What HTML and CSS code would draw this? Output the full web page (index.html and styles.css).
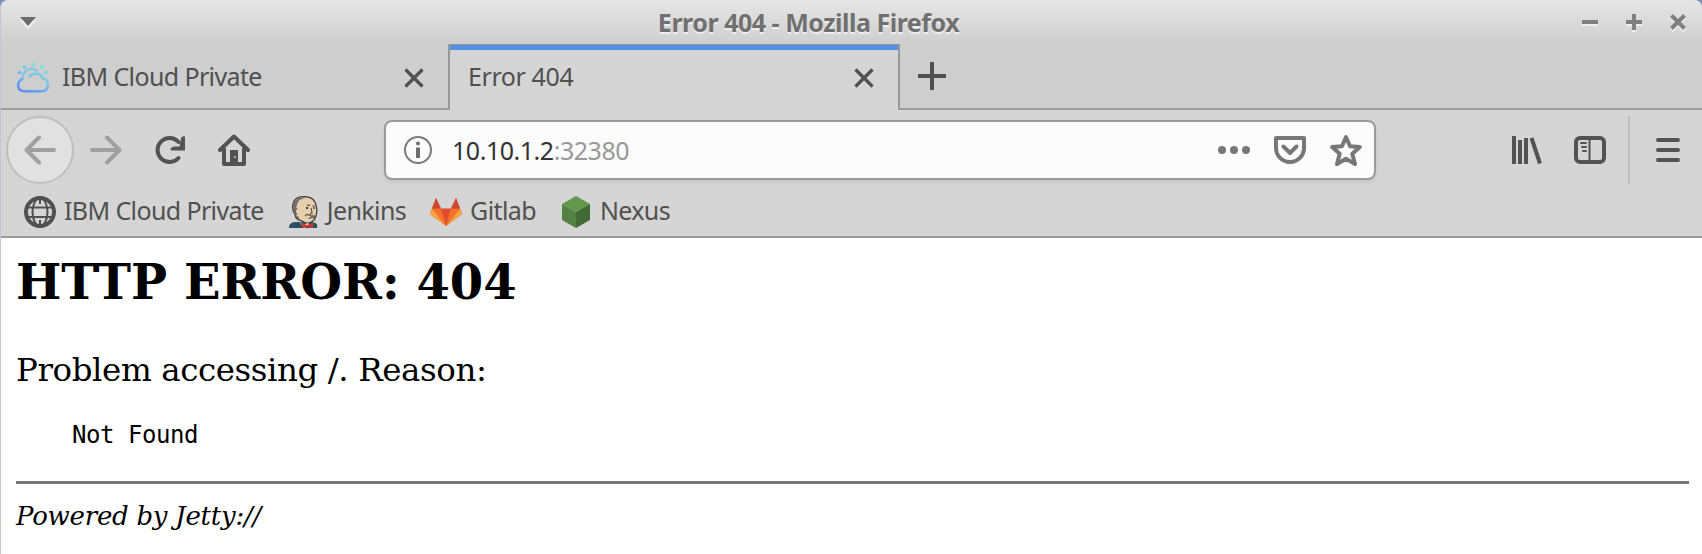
FILE: index.html
```html
<!DOCTYPE html>
<html lang="en">
<head>
<meta charset="utf-8">
<title>Error 404</title>
<link rel="stylesheet" href="styles.css">
</head>
<body>
<div class="window">
  <header class="titlebar">
    <svg class="menu-arrow" viewBox="0 0 18 14"><path d="M1 4h16l-8 9z" fill="#f2f2f2"/><path d="M1 1h16l-8 9z" fill="#6b6b6b"/></svg>
    <span class="window-title">Error 404 - Mozilla Firefox</span>
    <div class="window-buttons">
      <svg viewBox="0 0 20 20"><path d="M2 12h16" stroke="#eee" stroke-width="4"/><path d="M2 10h16" stroke="#808080" stroke-width="4"/></svg>
      <svg viewBox="0 0 20 20"><path d="M2 12h16M10 4v16" stroke="#eee" stroke-width="4"/><path d="M2 10h16M10 2v16" stroke="#808080" stroke-width="4"/></svg>
      <svg viewBox="0 0 20 20"><path d="M3.500 5.500l13 13M16.500 5.500l-13 13" stroke="#eee" stroke-width="4"/><path d="M3.500 3.500l13 13M16.500 3.500l-13 13" stroke="#808080" stroke-width="4"/></svg>
    </div>
  </header>

  <nav class="tabs">
    <div class="tab">
      <svg class="favicon cloud" viewBox="0 0 32 32" fill="none">
        <defs><linearGradient id="sky" gradientUnits="userSpaceOnUse" x1="8" y1="31" x2="22" y2="2"><stop offset="0" stop-color="#5a8cf0"/><stop offset=".5" stop-color="#78bdec"/><stop offset="1" stop-color="#83e2d4"/></linearGradient></defs>
        <path d="M5.500 17C5.500 10.500 9 8 13 7C16 6.500 19 7.500 20.500 9.500" stroke="#79c8e8" stroke-width="2"/>
        <path d="M5.500 17C2.500 18 1.200 20.500 1.200 23.500C1.200 27.500 3.500 29.300 8 29.300H24C28.500 29.300 30.800 27.500 30.800 23S28 16.500 25.500 16.300C24.500 13 22 11.500 19 11.500C16 11.500 14 12.500 12.500 14.500" stroke="url(#sky)" stroke-width="2.500" stroke-linecap="round"/>
        <path d="M1 9.500l3.500 2M6 3.500l2.500 3.300M16 .5v4M26.500 3l-3 3.500M31 9.500l-4 2" stroke="url(#sky)" stroke-width="3"/>
      </svg>
      <span class="tab-label">IBM Cloud Private</span>
      <svg class="close" viewBox="0 0 20 20"><path d="M1.500 1.500l17 17M18.500 1.500l-17 17"/></svg>
    </div>
    <div class="tab active">
      <span class="tab-label">Error 404</span>
      <svg class="close" viewBox="0 0 20 20"><path d="M1.500 1.500l17 17M18.500 1.500l-17 17"/></svg>
    </div>
    <div class="tab-rest">
      <svg class="new-tab" viewBox="0 0 28 28"><path d="M14 0v28M0 14h28"/></svg>
    </div>
  </nav>

  <div class="toolbar">
    <div class="back"><svg class="icon dim" viewBox="0 0 32 32"><path d="M30 16H3M15 3.500L2.500 16 15 28.500"/></svg></div>
    <svg class="icon dim forward" viewBox="0 0 32 32"><path d="M2 16h27M17 3.500L29.500 16 17 28.500"/></svg>
    <svg class="icon reload" viewBox="0 0 32 32"><path d="M24.500 24A12 12 0 1 1 24.500 8" stroke-width="4"/><path d="M31 3v13.500H18c-1.500 0-2-1.500-1-2.500l2.500-1.500h6L27 4c1-2 4-2.500 4-1z" fill="#535353" stroke="none"/></svg>
    <svg class="icon home" viewBox="0 0 32 32"><path d="M2 16L16 2.500 30 16M6 15v15h20V15" stroke-width="4"/><path d="M12 30V16h8v14z" fill="#535353" stroke="none"/><path d="M16 22h2v2h-2z" fill="#aaa" stroke="none"/></svg>

    <div class="urlbar">
      <svg class="info" viewBox="0 0 32 32"><circle cx="16" cy="16" r="13" fill="none" stroke="#7b7b7b" stroke-width="2"/><circle cx="16" cy="9.500" r="2" fill="#6d6d6d"/><path d="M16 13.500V24" stroke="#6d6d6d" stroke-width="4"/></svg>
      <span class="url">10.10.1.2<span class="port">:32380</span></span>
      <svg class="icon grey dots" viewBox="0 0 32 32"><g fill="#777" stroke="none"><circle cx="4" cy="16" r="4"/><circle cx="16" cy="16" r="4"/><circle cx="28" cy="16" r="4"/></g></svg>
      <svg class="icon grey pocket" viewBox="0 0 32 32"><path d="M2 4h28v10a14 14 0 0 1-28 0z"/><path d="M9.500 12.500L16 19l6.500-6.500"/></svg>
      <svg class="icon grey star" viewBox="0 0 32 32"><path d="M16 3l4 9.200 9.800.8-7.500 6.800L25 30l-9-5.200L7 30l2.700-10.200L2.200 13l9.800-.8z"/></svg>
    </div>

    <svg class="icon library" viewBox="0 0 32 32"><path d="M4 2v28M10 6v24M16 4v26M21.500 4L30 29.500"/></svg>
    <svg class="icon sidebar" viewBox="0 0 32 32"><rect x="2" y="4" width="28" height="24" rx="4"/><path d="M15.500 4v24M7 9h5M8 13h4M9 17h3" stroke-width="2"/></svg>
    <div class="separator"></div>
    <svg class="icon menu" viewBox="0 0 32 32"><path d="M6 6h20M6 16h20M6 26h20"/></svg>
  </div>

  <div class="bookmarks">
    <a class="bookmark globe">
      <svg class="favicon" viewBox="0 0 32 32" fill="none" stroke="#505050"><circle cx="16" cy="16" r="14" stroke-width="4"/><g stroke-width="2"><ellipse cx="16" cy="16" rx="7.500" ry="14"/><path d="M4 11.500h24M4 21h24M16 3v5M16 24v5"/></g></svg>
      <span>IBM Cloud Private</span>
    </a>
    <a class="bookmark jenkins">
      <svg class="favicon" viewBox="0 0 32 32">
        <path d="M1 32c0-5 3-6 8-6h13c6 0 8 2 7 6z" fill="#2d4f65"/>
        <path d="M6 5C10-1 23-1 27 6c3 7 2 14-1 18-4 4-8 4-12 1-5-1-7-3-7-7-3-3-3-9-1-13z" fill="#e7cfae" stroke="#453f38" stroke-width="1.300"/>
        <path d="M5 14c-1-5 0-8 3-10 3-3 8-3 12-2-5 0-8 1-10 4l-2 6-1 6z" fill="#6f706e"/>
        <path d="M9 12c-2 2-2 5 0 7M19 9l3 .5M24.500 10l2 .3M23 12l1 5-2 1M17 20c2-3 4-1 6 0 2 0 3-1 4 1-3 1-5 0-6 2M9 20l3 5" fill="none" stroke="#6d6154" stroke-width="1.400"/>
        <circle cx="19" cy="12" r="1"/><circle cx="26" cy="12" r=".8"/>
        <path d="M11 25l4 4 5-2 1 2-5 3z" fill="#f0ebe4"/>
        <path d="M14 27l5 2 6-2v5l-6-1-5 1z" fill="#cf3931"/>
      </svg>
      <span>Jenkins</span>
    </a>
    <a class="bookmark gitlab">
      <svg class="favicon" viewBox="0 0 32 32">
        <path d="M16 30L0 18l2-5.500L6 2l5 10.500h10L26 2l4 10.500 2 5.500z" fill="#e24c31"/>
        <path d="M16 30L2 12.500h9zM16 30l14-17.500h-9z" fill="#f5702b"/>
        <path d="M16 30L0 18l2-5.500zM16 30l16-12-2-5.500z" fill="#f6a33b"/>
        <path d="M6 2L2 12.500h9zM26 2l4 10.500h-9z" fill="#cf4830"/>
      </svg>
      <span>Gitlab</span>
    </a>
    <a class="bookmark nexus">
      <svg class="favicon" viewBox="0 0 32 32"><path d="M16 0l14 8-14 8-14-8z" fill="#65974b"/><path d="M2 8l14 8v16L2 24z" fill="#548143"/><path d="M30 8l-14 8v16l14-8z" fill="#426a35"/></svg>
      <span>Nexus</span>
    </a>
  </div>

  <main class="page">
    <h2>HTTP ERROR: 404</h2>
    <p>Problem accessing /. Reason:</p>
    <pre>    Not Found</pre>
    <hr>
    <i class="powered">Powered by Jetty://</i>
  </main>
</div>
</body>
</html>
```
FILE: styles.css
```css
* { box-sizing: border-box; }
body { margin: 0; background: #7b93bb; overflow: hidden; }
svg { display: block; flex: none; }

.window {
  height: 554px;
  display: flex;
  flex-direction: column;
  border-left: 1px solid #c3c7cf;
  border-radius: 8px 8px 0 0;
  overflow: hidden;
  background: #cecece;
  font: 25px/32px "Noto Sans", sans-serif;
  letter-spacing: -.62px;
  color: #505050;
}

.titlebar {
  height: 44px;
  display: grid;
  grid-template-columns: 300px 1fr 300px;
  align-items: center;
  background: linear-gradient(#e6e6e6, #cecece);
}
.menu-arrow { width: 18px; height: 14px; margin-left: 18px; margin-top: 2px; }
.window-title {
  justify-self: center;
  padding: 0 86px 0 0;
  font-weight: 700;
  letter-spacing: -.48px;
  color: #707070;
  text-shadow: 0 2px 0 #eee;
  white-space: nowrap;
}
.window-buttons { display: flex; justify-content: flex-end; gap: 24px; padding-right: 14px; }
.window-buttons svg { width: 20px; height: 20px; }

.tabs { height: 66px; display: flex; }
.tab {
  width: 447px;
  display: flex;
  align-items: center;
  padding: 0 24px 0 16px;
  border-bottom: 2px solid #9b9b9b;
}
.tab .favicon { margin-right: 13px; }
.cloud { margin-top: 4px; }
.tab.active {
  width: 452px;
  padding: 0 24px 4px 18px;
  background: #d5d5d5;
  border: 2px solid #999;
  border-width: 1px 2px 0;
  box-shadow: inset 0 5px #5290e2;
}
.tab.active .tab-label { letter-spacing: -.4px; }
.tab-label { flex: 1; }
.favicon { width: 32px; height: 32px; }
.close { width: 20px; height: 20px; stroke: #505050; stroke-width: 3.2; fill: none; margin-top: 4px; }
.tab-rest { flex: 1; padding: 18px 0 0 18px; border-bottom: 2px solid #9b9b9b; }
.new-tab { width: 28px; height: 28px; stroke: #505050; stroke-width: 4; }

.toolbar { height: 80px; display: flex; align-items: center; padding: 0 17px 0 5px; background: #d5d5d5; }
.back {
  width: 68px;
  height: 68px;
  display: grid;
  place-items: center;
  border: 2px solid #bfbfbf;
  border-radius: 50%;
  background: #e1e1e1;
}
.icon { width: 32px; height: 32px; fill: none; stroke: #535353; stroke-width: 4; stroke-linecap: round; stroke-linejoin: round; }
.dim { stroke: #a0a0a0; }
.grey { stroke: #777; }
.forward { margin-left: 16px; }
.reload { margin-left: 32px; }
.home { margin-left: 32px; }
.urlbar {
  width: 992px;
  height: 60px;
  margin-left: 134px;
  padding: 0 12px 0 16px;
  display: flex;
  align-items: center;
  background: #fcfcfc;
  border: 2px solid #9a9a9a;
  border-radius: 8px;
  box-shadow: 0 2px 4px rgba(0, 0, 0, .08);
}
.info { width: 32px; height: 32px; }
.url { flex: 1; margin-left: 18px; padding-bottom: 1px; letter-spacing: -.47px; color: #333; }
.port { color: #999; }
.pocket { margin-left: 24px; }
.star { margin-left: 24px; }
.library { margin-left: 134px; stroke-linecap: butt; }
.sidebar { margin-left: 32px; }
.separator { width: 2px; height: 68px; margin: 0 22px; background: #bebebe; }

.bookmarks { height: 48px; display: flex; align-items: center; padding: 0 0 6px 23px; background: #d5d5d5; border-bottom: 2px solid #9a9a9a; }
.bookmark { display: flex; align-items: center; gap: 8px; }
.bookmark .favicon { margin-top: 3px; }
.jenkins { margin-left: 24px; gap: 7px; }
.gitlab { margin-left: 24px; }
.nexus { margin-left: 24px; }

.page { flex: 1; padding: 16px 13px 0 15px; background: #fff; color: #000; letter-spacing: 0; font: 32.5px/38px "DejaVu Serif", serif; }
.page h2 { margin: 0; font-size: 48px; line-height: 56px; }
.page p { margin: 41px 0 0; letter-spacing: -.42px; }
.page pre { margin: 32px 0 0; font: 24px/28px "DejaVu Sans Mono", monospace; letter-spacing: -.45px; }
.page hr { margin: 32px 0 16px; height: 3px; border: 0; background: #777; }
.powered { font-size: 26px; line-height: 32px; display: block; letter-spacing: -.25px; }
```
